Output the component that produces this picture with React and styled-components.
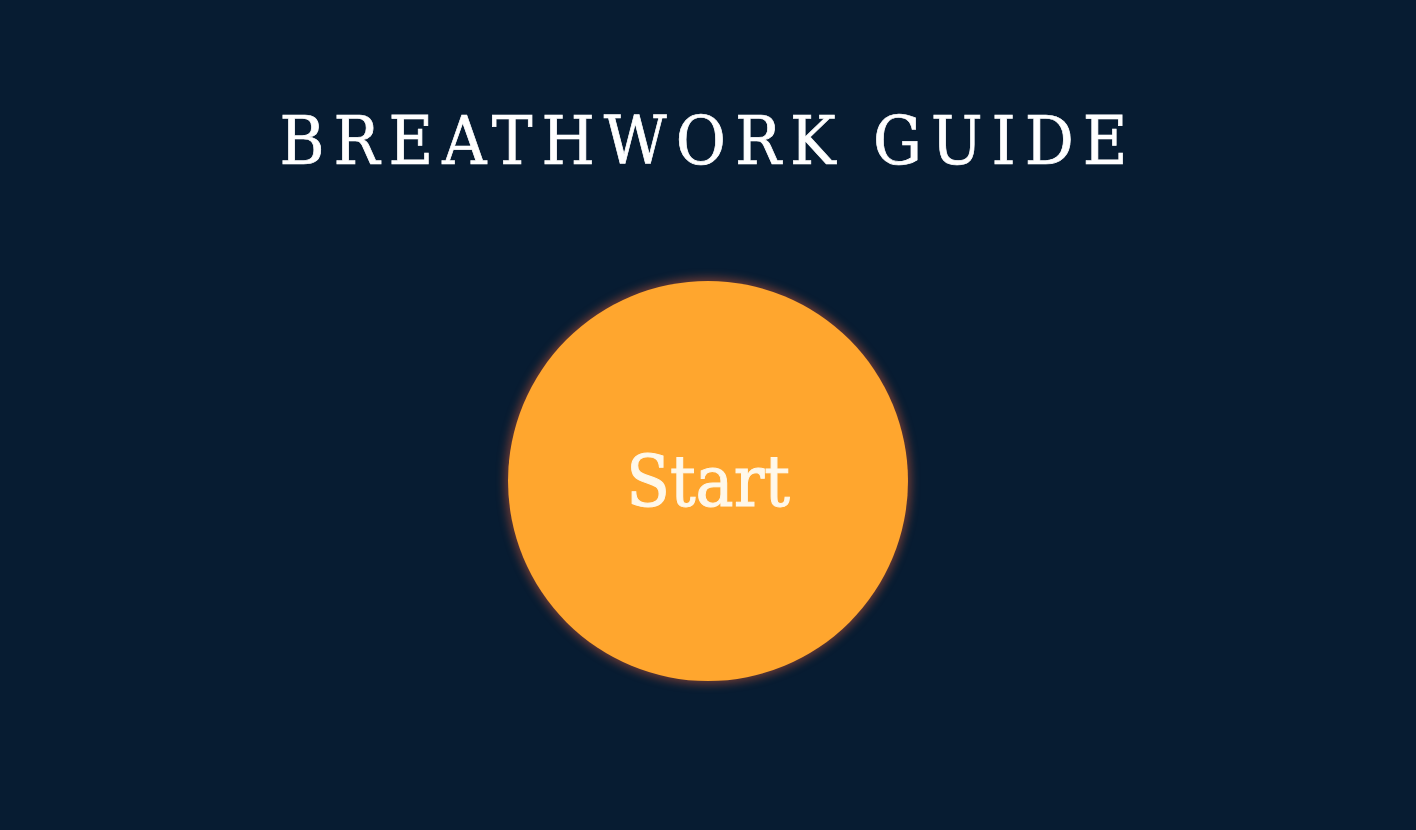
import styled, { createGlobalStyle } from "styled-components";

const GlobalStyle = createGlobalStyle`
  html, body {
    margin: 0;
    padding: 0;
    background: #071c32;
  }
`;

const Page = styled.main`
  height: 830px;
  display: flex;
  flex-direction: column;
  align-items: center;
  font-family: "DejaVu Serif", serif;
  font-stretch: condensed;
  color: #ffffff;
`;

const Title = styled.h1`
  margin: 96px 0 0;
  font-size: 68px;
  font-weight: 400;
  letter-spacing: 9px;
  line-height: 90px;
  -webkit-text-stroke: 0.7px #ffffff;
`;

const BreathCircle = styled.button`
  margin-top: 95px;
  width: 400px;
  height: 400px;
  border-radius: 50%;
  border: none;
  background: #ffa62e;
  box-shadow: 0 0 10px 3px rgba(235, 95, 55, 0.45);
  color: #fff8ea;
  font-family: inherit;
  font-stretch: condensed;
  font-size: 71px;
  -webkit-text-stroke: 1px #fff8ea;
  cursor: pointer;
  display: flex;
  align-items: center;
  justify-content: center;
`;

export default function App() {
  return (
    <>
      <GlobalStyle />
      <Page>
        <Title>BREATHWORK GUIDE</Title>
        <BreathCircle>Start</BreathCircle>
      </Page>
    </>
  );
}
